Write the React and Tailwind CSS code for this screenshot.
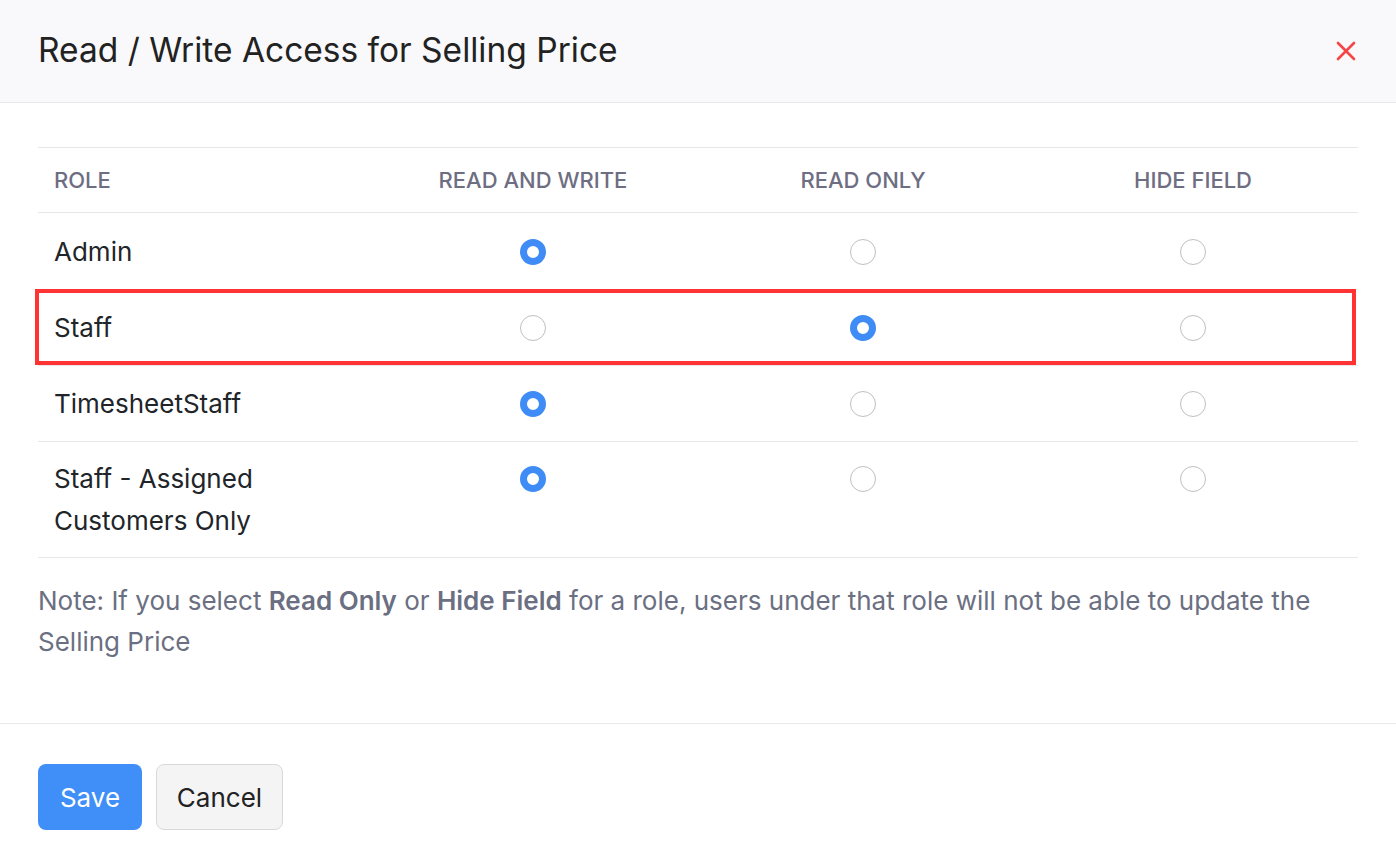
import React, { useState } from 'react';

const roles = [
  { id: 'admin', name: 'Admin', value: 'rw' },
  { id: 'staff', name: 'Staff', value: 'ro', highlight: true },
  { id: 'timesheet', name: 'TimesheetStaff', value: 'rw' },
  { id: 'assigned', name: 'Staff - Assigned Customers Only', value: 'rw' }
];

const options = ['rw', 'ro', 'hide'];

const Radio = ({ checked, onClick }) => (
  <button
    onClick={onClick}
    className={`w-[26px] h-[26px] rounded-full box-border ${
      checked ? 'border-[7px] border-[#3f8cf6] bg-white' : 'border-[1.5px] border-[#bfbfbf] bg-white'
    }`}
  />
);

const App = () => {
  const [access, setAccess] = useState(
    Object.fromEntries(roles.map((r) => [r.id, r.value]))
  );

  return (
    <div
      className="w-[1396px] h-[852px] bg-white flex flex-col text-[#212529]"
      style={{ fontFamily: 'Inter, "Noto Sans", sans-serif' }}
    >
      {/* Header */}
      <div className="h-[103px] shrink-0 bg-[#f9f9fb] border-b border-[#e9e9ec] flex items-center justify-between pl-[38px] pr-[40px]">
        <h1 className="text-[33.5px] font-normal leading-none text-[#222]">Read / Write Access for Selling Price</h1>
        <button className="text-[#f54545]">
          <svg width="20" height="20" viewBox="0 0 20 20" fill="none" stroke="currentColor" strokeWidth="2.6" strokeLinecap="round">
            <path d="M2 2 L18 18 M18 2 L2 18" />
          </svg>
        </button>
      </div>

      {/* Body */}
      <div className="px-[38px] pt-[44px] pb-[61px]">
        <div className="border-t border-[#e6e6eb]">
          <div className="grid grid-cols-4 h-[65px] items-center border-b border-[#e6e6eb] text-[22px] font-medium text-[#6e6e82] uppercase">
            <div className="pl-4">Role</div>
            <div className="text-center">Read and Write</div>
            <div className="text-center">Read Only</div>
            <div className="text-center">Hide Field</div>
          </div>
          {roles.map((role, i) => (
            <div
              key={role.id}
              className={`relative grid grid-cols-4 text-[26px] leading-[42px] border-b border-[#e6e6eb] ${
                i === 0 ? 'pt-[18px] pb-[16px]' : i === roles.length - 1 ? 'pt-[16px] pb-[15px]' : 'pt-[17px] pb-[16px]'
              }`}
            >
              <div className="pl-4 pr-12">{role.name}</div>
              {options.map((opt) => (
                <div key={opt} className="flex justify-center h-[42px] items-center">
                  <Radio
                    checked={access[role.id] === opt}
                    onClick={() => setAccess({ ...access, [role.id]: opt })}
                  />
                </div>
              ))}
              {role.highlight && (
                <div className="absolute top-[-1px] bottom-[0px] left-[-3px] right-[2px] border-[4px] border-[#ff3333] pointer-events-none" />
              )}
            </div>
          ))}
        </div>

        <p className="mt-[22px] text-[26px] leading-[41px] text-[#6b6f82]">
          Note: If you select <span className="font-semibold">Read Only</span> or{' '}
          <span className="font-semibold">Hide Field</span> for a role, users under that role will not be able to update the Selling Price
        </p>
      </div>

      {/* Footer */}
      <div className="border-t border-[#e9e9ec] px-[38px] pt-[40px] flex gap-[14px]">
        <button className="h-[66px] w-[104px] rounded-[8px] bg-[#408ef8] text-white text-[26px]">Save</button>
        <button className="h-[66px] w-[127px] rounded-[8px] bg-[#f4f4f4] border-[1.5px] border-[#d9d9d9] text-[#222] text-[26px]">Cancel</button>
      </div>
    </div>
  );
};

export default App;
